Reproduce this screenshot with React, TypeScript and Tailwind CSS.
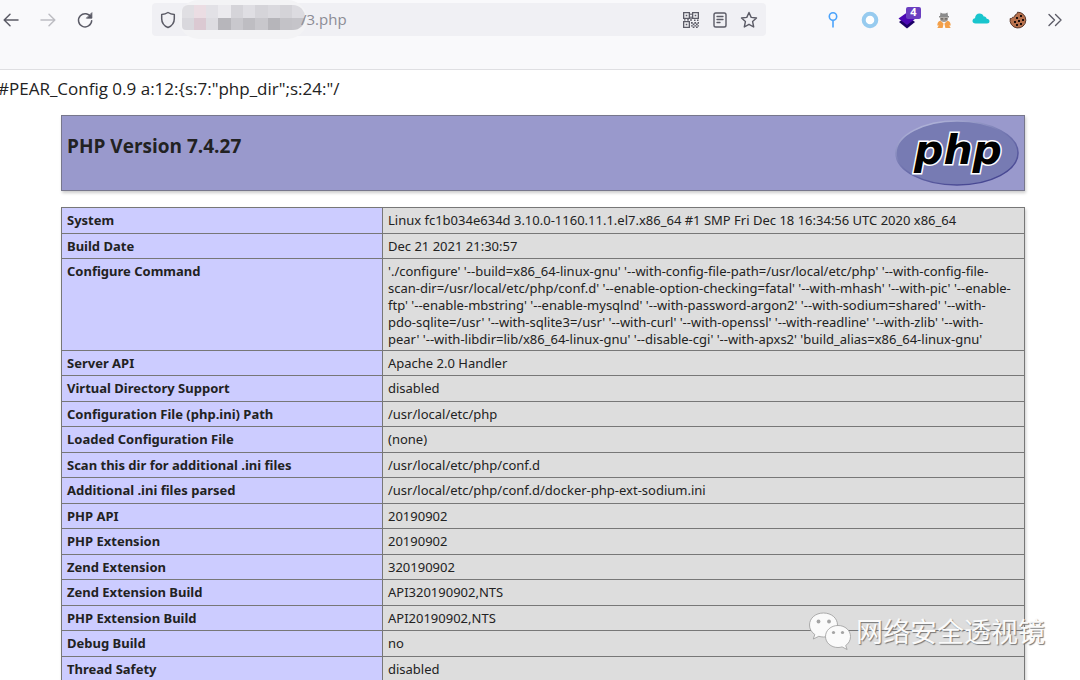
import type { ReactNode } from 'react';

const rows: { label: string; value: string[] }[] = [
  { label: 'System', value: ['Linux fc1b034e634d 3.10.0-1160.11.1.el7.x86_64 #1 SMP Fri Dec 18 16:34:56 UTC 2020 x86_64'] },
  { label: 'Build Date', value: ['Dec 21 2021 21:30:57'] },
  {
    label: 'Configure Command',
    value: [
      "'./configure' '--build=x86_64-linux-gnu' '--with-config-file-path=/usr/local/etc/php' '--with-config-file-",
      "scan-dir=/usr/local/etc/php/conf.d' '--enable-option-checking=fatal' '--with-mhash' '--with-pic' '--enable-",
      "ftp' '--enable-mbstring' '--enable-mysqlnd' '--with-password-argon2' '--with-sodium=shared' '--with-",
      "pdo-sqlite=/usr' '--with-sqlite3=/usr' '--with-curl' '--with-openssl' '--with-readline' '--with-zlib' '--with-",
      "pear' '--with-libdir=lib/x86_64-linux-gnu' '--disable-cgi' '--with-apxs2' 'build_alias=x86_64-linux-gnu'",
    ],
  },
  { label: 'Server API', value: ['Apache 2.0 Handler'] },
  { label: 'Virtual Directory Support', value: ['disabled'] },
  { label: 'Configuration File (php.ini) Path', value: ['/usr/local/etc/php'] },
  { label: 'Loaded Configuration File', value: ['(none)'] },
  { label: 'Scan this dir for additional .ini files', value: ['/usr/local/etc/php/conf.d'] },
  { label: 'Additional .ini files parsed', value: ['/usr/local/etc/php/conf.d/docker-php-ext-sodium.ini'] },
  { label: 'PHP API', value: ['20190902'] },
  { label: 'PHP Extension', value: ['20190902'] },
  { label: 'Zend Extension', value: ['320190902'] },
  { label: 'Zend Extension Build', value: ['API320190902,NTS'] },
  { label: 'PHP Extension Build', value: ['API20190902,NTS'] },
  { label: 'Debug Build', value: ['no'] },
  { label: 'Thread Safety', value: ['disabled'] },
];

const mosaic = [
  'bg-[#e0dfe3]', 'bg-[#ebdde3]', 'bg-[#e2e1e6]', 'bg-[#ebeaee]', 'bg-[#d5d4d9]',
  'bg-[#dfdee3]', 'bg-[#d5d4d9]', 'bg-[#dad9de]', 'bg-[#d4d3d8]', 'bg-[#dcdbe0]',
  'bg-[#d9d8dd]', 'bg-[#dbc9d2]', 'bg-[#dddce1]', 'bg-[#b7b6bb]', 'bg-[#c9c8cd]',
  'bg-[#bebdc2]', 'bg-[#c8c7cc]', 'bg-[#b6b5ba]', 'bg-[#c3c2c7]', 'bg-[#c5c4c9]',
];

function IconButton({ label, disabled, children }: { label: string; disabled?: boolean; children: ReactNode }) {
  return (
    <button
      type="button"
      aria-label={label}
      disabled={disabled}
      className="relative flex h-8 w-[37px] shrink-0 items-center justify-center text-[#5b5b66] disabled:text-[#bdbdc3]"
    >
      {children}
    </button>
  );
}

function LineIcon({ children, size = 18 }: { children: ReactNode; size?: number }) {
  return (
    <svg
      width={size}
      height={size}
      viewBox="0 0 18 18"
      fill="none"
      stroke="currentColor"
      strokeWidth="1.5"
      strokeLinecap="round"
      strokeLinejoin="round"
    >
      {children}
    </svg>
  );
}

function Toolbar() {
  return (
    <header className="h-[70px] shrink-0 border-b border-[#dfdfe2] bg-[#f9f9fb]">
      <div className="flex h-[39px] items-center pr-[7px]">
        <nav className="-ml-2 flex">
          <IconButton label="Back">
            <LineIcon>
              <path d="M16 9H2.5M8 3.2 2.2 9 8 14.8" />
            </LineIcon>
          </IconButton>
          <IconButton label="Forward" disabled>
            <LineIcon>
              <path d="M2 9h13.5M10 3.2 15.8 9 10 14.8" />
            </LineIcon>
          </IconButton>
          <IconButton label="Reload">
            <LineIcon>
              <path d="M15 6.3A6.6 6.6 0 1 0 15.7 9.8" />
              <path d="M15.9 2v5.2h-5.2z" fill="currentColor" strokeWidth="0.8" />
            </LineIcon>
          </IconButton>
        </nav>

        <div className="ml-[49px] flex h-[33px] flex-1 items-center rounded bg-[#f0f0f4] pr-2 pl-[7px] text-[#5b5b66]">
          <LineIcon>
            <path d="M9 1.5c1.8 1.2 4 1.9 6.3 2v4.2c0 4.2-2.3 7.1-6.3 8.8-4-1.7-6.3-4.6-6.3-8.8V3.5C5 3.4 7.2 2.7 9 1.5z" />
          </LineIcon>
          <div className="ml-0.5 flex h-[39px] w-[128px] items-center justify-center rounded-[20px] bg-[#f3f3f5]">
            <div className="mb-1 grid h-[25px] w-[123px] grid-cols-10 overflow-hidden rounded-r-xl rounded-tl-md rounded-bl-sm">
              {mosaic.map((tone, i) => (
                <span key={i} className={tone} />
              ))}
            </div>
          </div>
          <input
            aria-label="Address"
            defaultValue="/3.php"
            className="-ml-1.5 w-20 min-w-0 flex-1 bg-transparent text-[15px] text-[#8c8c94] outline-none"
          />
          <div className="flex gap-[11px]">
            <button type="button" aria-label="QR code">
              <svg width="18" height="18" viewBox="0 0 18 18" fill="currentColor">
                <path
                  fillRule="evenodd"
                  d="M1 1h7v7H1zM2.300 2.300v4.400h4.400V2.300zM10 1h7v7h-7zM11.300 2.300v4.400h4.400V2.300zM1 10h7v7H1zM2.300 11.300v4.400h4.400v-4.400z"
                />
                <path d="M3.700 3.700h1.600v1.600H3.700zM12.700 3.700h1.600v1.600h-1.600zM3.700 12.700h1.600v1.600H3.700z" />
                <path d="M8.300 2.500h1.400v1.500H8.300zM8.300 5.500h1.400V10H8.300zM2 8.200h1.500v1.400H2zM5 8.200h2v1.400H5zM12 8.500h1.500V10H12zM15 8.500h1.500V10H15z" />
                <path d="M9 11h1.700v1.700H9zM12.400 11h1.700v1.700h-1.700zM15.600 11h1.400v1.700h-1.400zM10.700 12.600h1.700v1.600h-1.700zM14 12.600h1.700v1.600H14zM9 14.200h1.700v1.400H9zM12.400 14.200h1.700v1.400h-1.700zM15.600 14.200h1.400v1.400h-1.400zM10.700 15.600h1.700V17h-1.700zM14 15.600h1.700V17H14z" />
              </svg>
            </button>
            <button type="button" aria-label="Reader view">
              <LineIcon>
                <rect x="3" y="2" width="12" height="14" rx="1.8" strokeWidth="1.4" />
                <path d="M6 5.500h6M6 8.500h6M6 11.500h3" strokeWidth="1.3" />
              </LineIcon>
            </button>
            <button type="button" aria-label="Bookmark this page">
              <LineIcon>
                <path
                  d="m9 1.500 2.200 4.900 5.300.6-3.900 3.600 1.100 5.400L9 13.300 4.300 16l1.100-5.400L1.500 7l5.300-.6z"
                  strokeWidth="1.4"
                />
              </LineIcon>
            </button>
          </div>
        </div>

        <div className="ml-12 flex">
          <IconButton label="Pin">
            <svg width="18" height="18" viewBox="0 0 18 18" fill="none" stroke="#4ba3fb" strokeWidth="1.6">
              <circle cx="9" cy="5.5" r="3.7" />
              <path d="M9 9.500V16.500" />
            </svg>
          </IconButton>
          <IconButton label="Ring">
            <svg width="18" height="18" viewBox="0 0 18 18">
              <circle cx="9" cy="9" r="6.3" fill="#fff" stroke="#97cbef" strokeWidth="4" />
            </svg>
          </IconButton>
          <IconButton label="Layers">
            <svg width="18" height="18" viewBox="0 0 18 18">
              <path d="M1 11 9 5l8 6-8 6.500z" fill="#1c0066" />
              <path d="M0.500 7.500 9 1.500l8.500 6L9 14z" fill="#4b08b4" />
            </svg>
            <span className="absolute top-[3px] right-1 flex h-3 w-[15px] items-center justify-center rounded-xs bg-[#6b3fc0] text-[11px] font-bold text-white">
              4
            </span>
          </IconButton>
          <IconButton label="Spy">
            <svg width="16" height="18" viewBox="0 0 16 18">
              <path d="M4.500 1.500 6.500 2.500h3l2-1 .5 3.500h1v1.500H3V5h1z" fill="#8b8b8b" />
              <path d="M4 6.500h8v1.500c0 1.800-2 3-4 3s-4-1.200-4-3z" fill="#a09a94" />
              <path d="M5 7.300h2v1.200H5zM9 7.300h2v1.200H9z" fill="#66625e" />
              <path d="M4.500 9.800 7.600 12.600 6.600 17H1.300L2.800 14.500H1.300C1.300 12 2.300 10.200 4.500 9.800zM11.500 9.800 8.400 12.600 9.400 17h5.300l-1.500-2.500h1.500c0-2.500-1-4.300-3.200-4.700z" fill="#f3a04a" />
            </svg>
          </IconButton>
          <IconButton label="Cloud">
            <svg width="18" height="18" viewBox="0 0 18 18" fill="#19c5cd">
              <path d="M3.500 12.500C1.700 12.500.5 11.500.5 10s1.100-2.600 2.500-2.700C3.200 4.500 5 2.500 7.500 2.500c2.100 0 3.600 1.200 4.200 3 .4-.2 2.600-.1 3 2.200 1.700.2 2.800 1.200 2.800 2.500s-1 2.300-2.500 2.300z" />
            </svg>
          </IconButton>
          <IconButton label="Cookie">
            <svg width="18" height="18" viewBox="0 0 18 18">
              <path
                d="M8.500 1.200A7.900 7.900 0 1 1 1.200 7.500c1.200.3 2-.2 2.300-1.200 1.700 0 2.600-.8 2.500-2.300C7.500 3.700 8.400 2.700 8.500 1.200z"
                fill="#b8714c"
                stroke="#59382b"
              />
              <g fill="#1c0e0b">
                <rect x="7" y="6" width="2" height="2" />
                <rect x="11" y="4" width="2" height="2" />
                <rect x="5" y="10" width="2" height="2" />
                <rect x="9" y="9" width="2" height="2" />
                <rect x="13" y="8" width="2" height="2" />
                <rect x="7" y="13" width="2" height="2" />
                <rect x="11" y="12" width="2" height="2" />
              </g>
            </svg>
          </IconButton>
          <IconButton label="More tools">
            <LineIcon>
              <path d="m3 3.500 5.500 5.500L3 14.500M9.500 3.500 15 9l-5.500 5.500" strokeWidth="1.4" />
            </LineIcon>
          </IconButton>
        </div>
      </div>
    </header>
  );
}

function PhpLogo() {
  return (
    <svg width="126" height="66" viewBox="0 0 126 66" role="img" aria-label="PHP logo">
      <defs>
        <linearGradient id="rim" x1="0.2" y1="0" x2="0.8" y2="1">
          <stop offset="0.05" stopColor="#b0b3d8" />
          <stop offset="0.4" stopColor="#777bb3" />
          <stop offset="0.9" stopColor="#484893" />
        </linearGradient>
      </defs>
      <ellipse cx="63" cy="33" rx="61" ry="32" fill="#777bb3" stroke="url(#rim)" strokeWidth="1.6" />
      <text
        x="64"
        y="44"
        textAnchor="middle"
        fontFamily="'DejaVu Sans', sans-serif"
        fontSize="41"
        fontWeight="bold"
        fontStyle="italic"
        fill="#000"
        stroke="#fff"
        strokeWidth="3"
        paintOrder="stroke"
      >
        php
      </text>
    </svg>
  );
}

function Watermark() {
  return (
    <div className="absolute top-[496px] -right-5 flex items-center gap-1">
      <svg width="44" height="40" viewBox="0 0 44 40" fill="#fafafa" stroke="#9a9a9a" strokeWidth="0.8">
        <path d="M15.500 2C7.500 2 1.500 7.200 1.500 14c0 4 2 7.200 5.300 9.500L5.300 28l5.500-2.700c1.500.4 3 .7 4.700.7 8 0 14-5.200 14-12S23.500 2 15.500 2z" />
        <path d="M30 14.500c-7 0-12.500 4.800-12.500 11S23 36.500 30 36.500c1.500 0 2.800-.2 4.100-.6l5 2.600-1.400-4c3-2 4.800-5.200 4.800-9 0-6.200-5.500-11-12.500-11z" />
        <g fill="#a4a4a4" stroke="none">
          <circle cx="10.5" cy="10.5" r="1.9" />
          <circle cx="21" cy="10.5" r="1.9" />
          <circle cx="25.5" cy="21.5" r="1.6" />
          <circle cx="34.5" cy="21.5" r="1.6" />
        </g>
      </svg>
      <span className="font-['Noto_Sans_CJK_SC',sans-serif] text-[27px] leading-10 whitespace-nowrap text-[#fafafa] [text-shadow:1px_1px_1px_#777]">
        网络安全透视镜
      </span>
    </div>
  );
}

export default function App() {
  return (
    <div className="flex h-screen flex-col overflow-hidden bg-white font-['Open_Sans',sans-serif] text-[#222]">
      <Toolbar />
      <main className="pl-[6px]">
        <p className="-ml-2 py-2 text-[17px] leading-[22px] whitespace-nowrap">
          {'#PEAR_Config 0.9 a:12:{s:7:"php_dir";s:24:"/'}
        </p>
        <div className="relative mx-auto mt-[7px] w-[calc(100%-110px)] max-w-[964px]">
          <div className="flex h-[76px] justify-between border border-[#77778c] bg-[#9999cc] pr-1 pl-[5px] shadow-[1px_2px_3px_#ccc]">
            <h1 className="pt-4 text-[19px] leading-7 font-bold">PHP Version 7.4.27</h1>
            <a href="https://www.php.net/" className="pt-1">
              <PhpLogo />
            </a>
          </div>

          <table className="mt-4 w-full table-fixed border-collapse font-['Noto_Sans',sans-serif] text-[13px] leading-[17px] shadow-[1px_2px_3px_#ccc]">
            <colgroup>
              <col className="w-1/3" />
              <col />
            </colgroup>
            <tbody>
              {rows.map(({ label, value }) => (
                <tr key={label} className="h-[25px] odd:h-[26px]">
                  <th scope="row" className="border border-[#777] bg-[#ccccff] px-[5px] pt-1 pb-0.5 text-left align-top font-bold">
                    {label}
                  </th>
                  <td className="border border-[#777] bg-[#dddddd] px-[5px] pt-1 pb-0.5 align-top">
                    {value.map(line => (
                      <span key={line} className="block whitespace-nowrap">
                        {line}
                      </span>
                    ))}
                  </td>
                </tr>
              ))}
            </tbody>
          </table>
          <Watermark />
        </div>
      </main>
    </div>
  );
}
